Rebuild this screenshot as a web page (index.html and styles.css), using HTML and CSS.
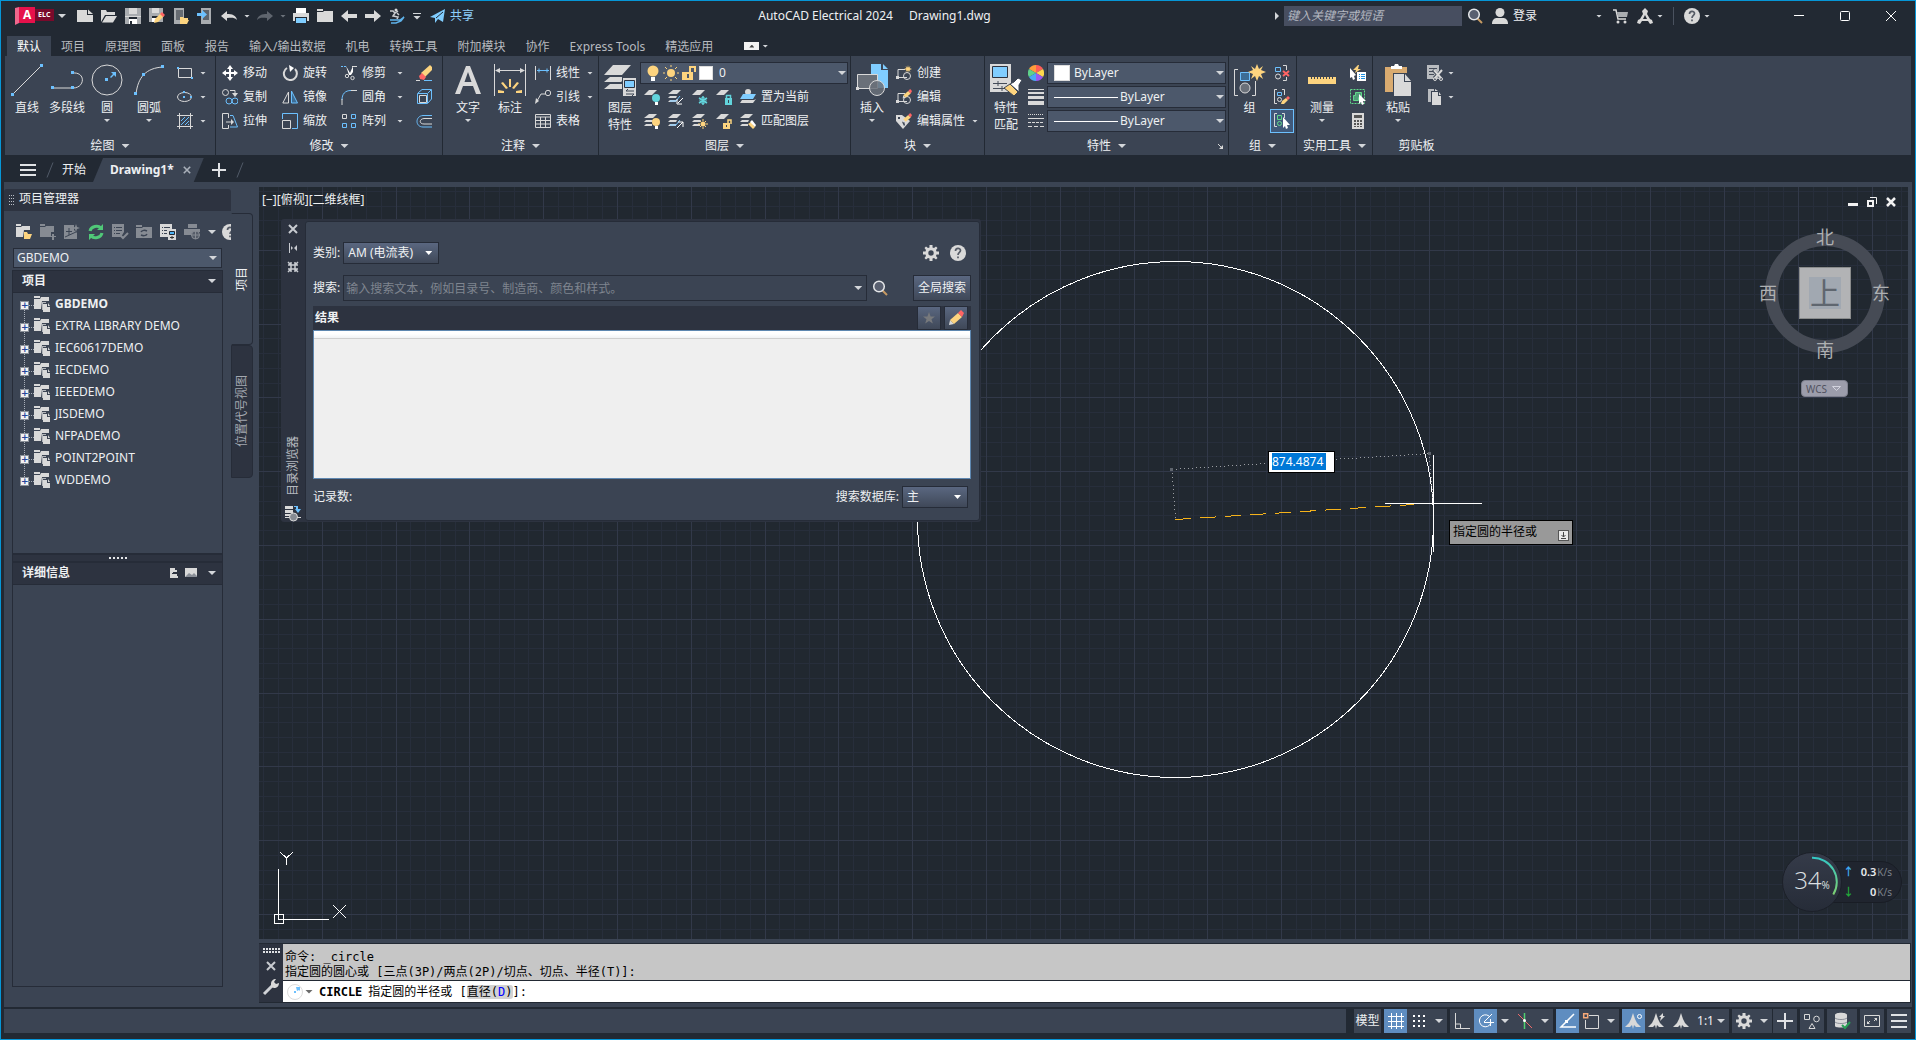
FILE: index.html
```html
<!DOCTYPE html>
<html lang="zh-CN">
<head>
<meta charset="utf-8">
<title>AutoCAD Electrical 2024 - Drawing1.dwg</title>
<link rel="stylesheet" href="styles.css">
</head>
<body>
<svg class="sprite" aria-hidden="true">
  <symbol id="i-new" viewBox="0 0 16 16"><path class="f" d="M0 2h10v5h6v7H0z"/><path class="f" d="M11 1.500l5 4.500h-5z"/></symbol>
  <symbol id="i-open" viewBox="0 0 16 16"><path class="f" d="M0 2h5l1 2h8v3H4L0 14zM5 8h11l-4 6.500H1z"/></symbol>
  <symbol id="i-save" viewBox="0 0 16 16"><path fill="#a9acb0" d="M0 0h16v16H0z"/><path class="f" d="M4 0h8v6H4zM0 8h16v1H0z"/><path fill="#fff" d="M4 11h8v5H4z"/><path fill="#222933" d="M4 9h8v2H4zM5 13h2v3H5z"/></symbol>
  <symbol id="i-saveas" viewBox="0 0 16 16"><path fill="#a9acb0" d="M0 0h14v14H0z"/><path class="f" d="M3 0h7v5H3z"/><path fill="#222933" d="M3 8h8v2H3z"/><path fill="#fff" d="M3 10h4v4H3z"/><path class="y" d="M5 15l1-4 6-6 3 3-6 6z"/><path class="r" d="M11 6l2-2 3 3-2 2z"/></symbol>
  <symbol id="i-webopen" viewBox="0 0 16 16"><path fill="#a9acb0" d="M1 0h10v16H1z"/><path fill="#666b72" d="M3 2h7v10H3z"/><path class="y" d="M7 9h3l1 1h4v2l1 0-2 4H7z"/></symbol>
  <symbol id="i-websave" viewBox="0 0 16 16"><path fill="#a9acb0" d="M4 0h10v16H4z"/><path fill="#5d636c" d="M6 2h6v10H6z"/><path class="b" d="M0 5h5V2l5 4.500L5 11V8H0z"/></symbol>
  <symbol id="i-undo" viewBox="0 0 16 16"><path class="f" d="M0 8l6-5v3c5 0 9 1 10 6-3-3-6-2-10-2v3z"/></symbol>
  <symbol id="i-redo" viewBox="0 0 16 16"><path fill="#5f656e" d="M16 8l-6-5v3C5 6 1 7 0 12c3-3 6-2 10-2v3z"/></symbol>
  <symbol id="i-print" viewBox="0 0 16 16"><path fill="#fff" d="M3 0h10v5H3z"/><path class="f" d="M0 5h16v8h-2V9H2v4H0z"/><path fill="#80cdff" d="M3 10h10v5H3z"/></symbol>
  <symbol id="i-folder" viewBox="0 0 16 16"><path class="f" d="M0 1h6v2H0zM0 4h6l1-1h9v11H0z"/></symbol>
  <symbol id="i-left" viewBox="0 0 16 16"><path class="f" d="M0 8l7-6v4h9v4H7v4z"/></symbol>
  <symbol id="i-right" viewBox="0 0 16 16"><path class="f" d="M16 8L9 2v4H0v4h9v4z"/></symbol>
  <symbol id="i-surf" viewBox="0 0 16 16"><g fill="none" stroke="#c9ccd0" stroke-width="1.500"><path d="M1 3h3l2 2 3-2M6 5L4 8l5 1-1 2M8 5l2 2"/></g><circle class="f" cx="7" cy="2" r="1.500"/><path fill="none" stroke="#5fb3ec" stroke-width="1.500" d="M1 12h10l4-3-3 4-5 2H2"/></symbol>
  <symbol id="i-plane" viewBox="0 0 16 16"><path fill="#80cdff" d="M0 9L15 1l-2 13-5-3-3 4v-5z"/><path stroke="#222933" fill="none" d="M6 10l7-6"/></symbol>
  <symbol id="i-mag" viewBox="0 0 16 16"><path stroke="#c79a63" stroke-width="2" d="M10 10l5 5"/><circle cx="7" cy="6.500" r="5.300" fill="#596070" stroke="#e4e6e8" stroke-width="1.500"/></symbol>
  <symbol id="i-user" viewBox="0 0 16 16"><circle class="f" cx="8" cy="4.500" r="4.500"/><path class="f" d="M0 16c0-5 3-6 5-6h6c2 0 5 1 5 6z"/></symbol>
  <symbol id="i-cart" viewBox="0 0 16 16"><path fill="none" stroke="#d9d9d9" stroke-width="1.500" d="M0 2h3l2 9h8"/><path fill="#a9acb0" d="M4 4h11l-1 5H5z"/><circle class="f" cx="5" cy="14" r="1.500"/><circle class="f" cx="12" cy="14" r="1.500"/></symbol>
  <symbol id="i-adsk" viewBox="0 0 16 16"><path class="f" fill-rule="evenodd" d="M8 0l3 3-1 3 3 5 2 1 1 3-3 1-2-3H5l-2 3-3-1 1-3 2-1 3-5-1-3zM8 7l-2 4h4z"/></symbol>
  <symbol id="i-help" viewBox="0 0 16 16"><circle class="f" cx="8" cy="8" r="8"/><path fill="none" stroke="#555b66" stroke-width="1.700" d="M5.500 6c0-3.500 5-3.300 5-.5C10.500 7.500 8 7.300 8 10M8 11.500v1.800"/></symbol>

  <symbol id="i-line" viewBox="0 0 32 32"><path class="l" d="M2 30L30 2"/><path class="b" d="M0 29h3v3H0zM29 0h3v3h-3z"/></symbol>
  <symbol id="i-pline" viewBox="0 0 32 32"><path class="l" d="M2 24h20M22 9c13-1 12 15 0 15"/><path class="b" d="M0 22h3v3H0zM20 22h3v3h-3zM20 7h3v3h-3z"/></symbol>
  <symbol id="i-circle" viewBox="0 0 32 32"><circle class="l" cx="16" cy="16" r="15"/><path class="b" d="M14 14h3v3h-3zM19 13l3-3-2-2h5v5l-2-2-3 3z"/></symbol>
  <symbol id="i-arc" viewBox="0 0 32 32"><path class="l" d="M3 30C5 13 13 4 30 3"/><path class="b" d="M1 28h3v3H1zM9 9h3v3H9zM28 1h3v3h-3z"/></symbol>
  <symbol id="i-rect" viewBox="0 0 16 16"><path class="l" d="M1.500 3.500h13v9h-13z"/><path class="b" d="M0 2h2v2H0zM14 12h2v2h-2z"/></symbol>
  <symbol id="i-ellipse" viewBox="0 0 16 16"><ellipse class="l" cx="7.500" cy="8" rx="7" ry="4.500"/><path class="b" d="M6 7h2v2H6zM6 2h2v2H6zM13 7h2v2h-2z"/></symbol>
  <symbol id="i-hatch" viewBox="0 0 16 16"><path class="l" d="M2.500 0v16M13.500 0v16M0 2.500h16M0 13.500h16"/><path class="lb" d="M4 8l4-4M4 12l8-8M8 12l4-4M11 12l1-1"/></symbol>

  <symbol id="i-move" viewBox="0 0 16 16"><path fill="#fff" d="M8 0l3 4H9v3h3V5l4 3-4 3V9H9v3h2l-3 4-3-4h2V9H4v2L0 8l4-3v2h3V4H5z"/></symbol>
  <symbol id="i-rotate" viewBox="0 0 16 16"><path class="l w" d="M5 3a6.500 6.500 0 1 0 8 1"/><path fill="#fff" d="M7 0l5 3-4 4z"/></symbol>
  <symbol id="i-trim" viewBox="0 0 16 16"><path class="lb" stroke-dasharray="2 1" d="M0 1.500h5"/><path class="l" d="M11 1.500h5"/><path fill="#fff" d="M5 1l4 7 3-7v6l-2 3-2 0z"/><circle class="l" cx="6" cy="11" r="1.700"/><circle class="l" cx="11.500" cy="13" r="1.700"/></symbol>
  <symbol id="i-erase" viewBox="0 0 16 16"><path class="y" d="M5 8l9-8 2 2v3l-7 7z"/><path class="r" d="M3 11l3-3 4 4-2 3-4-1z"/><path class="lb" d="M8 15.500h8"/><path class="l" d="M0 15.500h4"/></symbol>
  <symbol id="i-copy" viewBox="0 0 16 16"><circle class="l" cx="3.500" cy="3.500" r="3"/><circle class="lb" cx="7" cy="12" r="3"/><circle class="lb" cx="13" cy="12" r="3"/><path class="l" d="M8 1.500h5V5"/><path class="f" d="M10 4h6l-3 4z"/></symbol>
  <symbol id="i-mirror" viewBox="0 0 16 16"><path class="l" d="M6.500 3v11H.8z"/><path fill="#3d6d95" stroke="#6cc0fe" d="M9.500 2v12h6z"/></symbol>
  <symbol id="i-fillet" viewBox="0 0 16 16"><path class="lb" d="M1 11C1 5 4 1.500 10 1.500"/><path class="l" d="M10 1.500h6M1 10v6"/></symbol>
  <symbol id="i-box" viewBox="0 0 16 16"><path class="lb" d="M2 4l4-3.500h9.500V10L12 14M15 1l-3 3M1.500 4.500h10v10h-10z"/><path class="l" d="M3.500 6.500h7v7h-7z"/></symbol>
  <symbol id="i-stretch" viewBox="0 0 16 16"><path class="l" d="M6.500 5V.5h-6v15h6V12M4 9h6"/><path class="lb" d="M8 2.500h3L15.500 14H8"/><path class="f" d="M9 6l3 3-3 3z"/></symbol>
  <symbol id="i-scale" viewBox="0 0 16 16"><path class="lb" d="M.5 6V.5h15v15H10"/><path class="l" d="M.5 7.500h8v8h-8z"/></symbol>
  <symbol id="i-array" viewBox="0 0 16 16"><path class="l" d="M1.500 1.500h4v4h-4z"/><path class="lb" d="M10.500 1.500h4v4h-4zM1.500 10.500h4v4h-4zM10.500 10.500h4v4h-4z"/></symbol>
  <symbol id="i-offset" viewBox="0 0 16 16"><path class="lb" d="M16 2.500H7C-1 3-1 14 7 14h9"/><path class="l" d="M16 5.500H8C3 6 3 11 8 11h8"/></symbol>

  <symbol id="i-text" viewBox="0 0 32 32"><path class="f" d="M3 30L14 2h4l11 28h-5l-3-8H11l-3 8zM12.500 18h7L16 8z"/></symbol>
  <symbol id="i-dim" viewBox="0 0 32 32"><path class="l" d="M.5 0v32M31.500 0v32M2 6.500h28"/><path class="f" d="M1 6.500L6 4v5zM31 6.500L26 4v5z"/><path class="y" d="M4 26l6 1v2H4zM7 19l2-1 5 6-2 1zM15 15h2v8h-2zM25 19l-2-1-5 6 2 1zM28 26l-6 1v2h6z"/></symbol>
  <symbol id="i-linear" viewBox="0 0 16 16"><path class="l" d="M.5 1v14M15.500 1v14"/><path class="lb" d="M2 5.500h12M4 3.500v4M12 3.500v4"/></symbol>
  <symbol id="i-leader" viewBox="0 0 16 16"><circle class="l" cx="13" cy="4" r="2.700"/><path class="l" d="M10 5H6L2 12"/><path class="f" d="M0 15l1-6 3 3z"/></symbol>
  <symbol id="i-table" viewBox="0 0 16 16"><path class="l" d="M.5 1.500h15v13H.5zM.5 4h15M.5 7.500h15M.5 11h15M5.500 4v10M10.500 4v10"/></symbol>

  <symbol id="i-layers" viewBox="0 0 32 32"><path class="f" d="M9 1h18L18 11H0zM6 13h16l-5 5H0zM6 20h12v5H0z"/><path fill="#3b4453" d="M18 13h14v19H18z"/><path class="f" d="M19 14h13v18H19z"/><path fill="#80cdff" stroke="#2d3340" d="M20.500 16.500h10v7h-10z"/><path stroke="#3b4453" d="M22 27h8M22 30h8M24 25l-2 2M28 32l2-2" fill="none"/></symbol>
  <symbol id="i-bulb" viewBox="0 0 16 16"><circle class="y" cx="8" cy="6" r="5.500"/><path fill="#fff" d="M6 12h4v4H6z"/></symbol>
  <symbol id="i-sun" viewBox="0 0 16 16"><circle class="y" cx="8" cy="8" r="4"/><path class="ly" d="M8 0v2M8 14v2M0 8h2M14 8h2M2 2l2 2M12 12l2 2M14 2l-2 2M4 12l-2 2"/></symbol>
  <symbol id="i-unlock" viewBox="0 0 16 16"><path class="y" d="M1 7h11v8H1z"/><path fill="none" stroke="#fdd47f" stroke-width="2" d="M9 7V2h5v5"/><path fill="#4c586b" d="M6 9h2v4H6z"/></symbol>
  <symbol id="l-one" viewBox="0 0 16 16"><path class="f" d="M5 1h8L8 6H0z"/></symbol>
  <symbol id="l-three" viewBox="0 0 16 16"><path class="f" d="M5 1h8L9 5H0zM2 7h7l-1 2H0zM2 11h6v2H0z"/></symbol>
  <symbol id="i-lyset" viewBox="0 0 16 16"><circle class="f" cx="8" cy="3" r="3"/><path fill="#80cdff" d="M3 5h13l-3 5H0z"/><path class="f" d="M2 11h12l2-1-3 4H0z"/></symbol>
  <symbol id="i-lymatch" viewBox="0 0 16 16"><path class="f" d="M5 1h8L9 5H0zM2 7h7l-1 2H0zM2 11h6v2H0z"/><path class="y" d="M8 11l3-2 4 5-2 2z"/><path fill="#fff" d="M10 9l2-2 4 5-1 2z"/></symbol>

  <symbol id="i-insert" viewBox="0 0 32 32"><path fill="#80cdff" d="M15 0h10v6h7v18H15z"/><path fill="#80cdff" d="M27 0l5 5h-5z"/><path fill="#6a7079" stroke="#d9d9d9" d="M1.500 10.500h20v14h-20z"/><circle fill="#6a7079" fill-opacity=".85" stroke="#d9d9d9" cx="21" cy="24" r="7.500"/><path class="f" d="M0 23h3v3H0z"/></symbol>
  <symbol id="i-block" viewBox="0 0 16 16"><path class="l" d="M9 4.500H2v8h9"/><circle class="l" cx="11" cy="11" r="3.500"/><path class="f" d="M0 11h3v3H0z"/></symbol>
  <symbol id="i-star8" viewBox="0 0 16 16"><path class="y" d="M8 0l1 5 4-3-2 4 5 2-5 2 2 4-4-3-1 5-1-5-4 3 2-4-5-2 5-2-2-4 4 3z"/></symbol>
  <symbol id="i-pencil" viewBox="0 0 16 16"><path class="f" d="M1 15l1-5 4 4z"/><path class="y" d="M2 10l8-7 4 4-8 7z"/><path class="r" d="M10 3l3-3 3 3-2 4z"/></symbol>
  <symbol id="i-tag" viewBox="0 0 16 16"><path class="f" d="M0 2h6l8 6-7 8-7-8z"/><path fill="#3b4453" d="M2 4h2v2H2zM6 9l2-1 1 4-1 1z"/></symbol>

  <symbol id="i-match" viewBox="0 0 32 32"><path class="f" d="M0 0h21v28H0z"/><path fill="#80cdff" stroke="#2d3340" d="M2.500 2.500h15v11h-15z"/><path stroke="#444c59" d="M3 19.500h14M3 24.500h14M8 17v5M12 22v5"/><path class="y" stroke="#3b4453" d="M14 24l6-4 8 8-4 4z"/><path fill="#fff" stroke="#3b4453" d="M20 20l4-2 4-4 4 2-3 5v7z"/></symbol>
  <symbol id="i-wheel" viewBox="0 0 16 16"><path fill="#ff5e57" d="M8 8V0a8 8 0 0 1 7 4z"/><path fill="#ff9d3b" d="M8 8L1 4a8 8 0 0 1 7-4z" /><path fill="#ffd84d" d="M8 8l7-4a8 8 0 0 1 0 8z"/><path fill="#5fd18a" d="M8 8L1 12a8 8 0 0 1 0-8z"/><path fill="#9b59f0" d="M8 8l7 4a8 8 0 0 1-7 4z"/><path fill="#4aa8f5" d="M8 8v8a8 8 0 0 1-7-4z"/></symbol>
  <symbol id="i-weight" viewBox="0 0 16 16"><path class="f" d="M0 0h16v1H0zM0 3h16v2H0zM0 7h16v3H0zM0 12h16v4H0z"/></symbol>
  <symbol id="i-ltype" viewBox="0 0 16 16"><path class="l" d="M0 5.500h16" /><path class="l" stroke-dasharray="1 1" d="M0 1.500h16"/><path class="l" stroke-dasharray="3 1" d="M0 9.500h16"/><path class="l" stroke-dasharray="4 2" d="M0 13.500h16"/></symbol>

  <symbol id="i-group" viewBox="0 0 32 32"><path class="l" d="M4 5.500H.5v26H4M18 31.500h3.500V17"/><path fill="#3d6d95" stroke="#6cc0fe" d="M6.500 8.500h9v8h-9z"/><circle fill="#6a7079" stroke="#d9d9d9" cx="11" cy="24" r="5"/><path class="y" d="M23 0l2 5 4-3-2 4 5 2-5 2 2 5-4-3-2 5-2-5-4 3 2-5-5-2 5-2-2-4 4 3z"/></symbol>
  <symbol id="i-ungroup" viewBox="0 0 16 16"><path class="lb" d="M1.500 2.500h5v4h-5z"/><circle class="l" cx="4" cy="11.500" r="2.500"/><path class="l" d="M9 .5h3.500V5M9 15.500h3.500V12"/><path stroke="#ff6464" stroke-width="2" d="M9 6l6 5M15 6l-6 5"/></symbol>
  <symbol id="i-gedit" viewBox="0 0 16 16"><path class="l" d="M3 .5H.5v14H3M8 .5h2.500V6"/><path class="lb" d="M3.500 3.500h4v3h-4z"/><circle class="l" cx="5.500" cy="10.500" r="2"/><path class="y" d="M7 15l1-3 4-3 2 2-4 4z"/><path class="r" d="M12 9l2-2 2 2-2 2z"/></symbol>
  <symbol id="i-gsel" viewBox="0 0 16 16"><path class="l" d="M3 .5H.5v13H3M8 .5h2.500V5"/><path fill="none" stroke="#62d98b" d="M3.500 2.500h4v4h-4z"/><circle fill="none" stroke="#62d98b" cx="5.500" cy="10.500" r="2"/><path fill="#fff" d="M9 4l7 8h-3l1 3-2 1-1-3-2 2z"/></symbol>
  <symbol id="i-ruler" viewBox="0 0 32 32"><path class="y" d="M2 13h28v7H2z"/><path stroke="#3b4453" d="M5.500 12v3M8.500 12v3M11.500 12v3M14.500 12v3M17.500 12v3M20.500 12v3M23.500 12v3M26.500 12v3"/></symbol>
  <symbol id="i-qsel" viewBox="0 0 16 16"><path fill="#fff" d="M0 3l6 7-2 1 1 3-2 1-1-3-2 1z"/><path class="y" d="M8 0L3 5h3L5 8l6-4H8l1-4z"/><path fill="#fff" d="M7 7h9v9H7z"/><path stroke="#1f8fe0" d="M9 9.500h1M11 9.500h4M9 11.500h1M11 11.500h4M9 13.500h1M11 13.500h4"/></symbol>
  <symbol id="i-selall" viewBox="0 0 16 16"><path fill="none" stroke="#62d98b" stroke-dasharray="2 1" d="M.5.5h14v14H.5z"/><path fill="#4f9d78" stroke="#62d98b" d="M5.500 3.500h6v5h-3v3h-5v-5h2z"/><path fill="#fff" d="M9 5l7 7h-3l1 3-2 1-1-3-2 2z"/></symbol>
  <symbol id="i-calc" viewBox="0 0 16 16"><path class="f" d="M2 0h12v16H2z"/><path fill="#555" d="M4 2h8v3H4zM4 7h2v2H4zM7 7h2v2H7zM10 7h2v2h-2zM4 10h2v2H4zM7 10h2v2H7zM10 10h2v2h-2zM4 13h2v1H4zM7 13h2v1H7zM10 13h2v1h-2z"/></symbol>
  <symbol id="i-paste" viewBox="0 0 32 32"><path fill="#d9ab70" d="M3 3h22v6H11v19H3z"/><path fill="#fff" d="M9 2h3l1-2h3l1 2h3v3H9z"/><path class="f" d="M12 10h10v8h7v14H12z"/><path class="f" d="M23 10l6 7h-6z"/></symbol>
  <symbol id="i-cut" viewBox="0 0 16 16"><path fill="#b9bcc0" d="M0 0h12v14H0z"/><path stroke="#444c59" d="M2 3.500h8M2 6.500h5M2 9.500h5"/><path stroke="#3b4453" stroke-width="3" d="M6 5l8 8M15 5l-8 8"/><path class="l w" d="M7 5l7 8M15 5l-7 8"/><circle class="l" cx="8" cy="14" r="1.500"/><circle class="l" cx="14" cy="14" r="1.500"/></symbol>
  <symbol id="i-copyclip" viewBox="0 0 16 16"><path fill="#b9bcc0" d="M1 0h6v2H4v11H1z"/><path class="f" d="M5 3h6v4h3v9H5zM12 3l2 3h-2zM8 0l3 2H8z"/></symbol>

  <symbol id="i-proj" viewBox="0 0 16 16"><path class="f" d="M0 0h6v2H0zM0 3h6l1-2h8v4H8l-1 8H0z"/><path fill="#b4b7bb" d="M8 6h4v1H9v7H8z"/><path class="f" d="M9 8h4v3h3v5H9zM14 7l2 3h-2z"/></symbol>
  <symbol id="i-gear" viewBox="0 0 16 16"><path class="f" fill-rule="evenodd" d="M6.500 0h3v2.500l1.500.6L13 1.500 14.500 3 13 5l.5 1.500H16v3h-2.500L13 11l1.500 2-1.500 1.500-2-1.500-1.500.5V16h-3v-2.500L5 13l-2 1.500L1.500 13 3 11l-.5-1.500H0v-3h2.500L3 5 1.500 3 3 1.500l2 1.600 1.500-.6zM8 5.300a2.700 2.700 0 1 0 0 5.400 2.700 2.700 0 0 0 0-5.400z"/></symbol>
  <symbol id="i-anno" viewBox="0 0 16 16"><path class="f" d="M8 0l2 6 2 4 4 4-5 0-2-2-1 4-1-4-2 2H0l4-4 2-4z"/></symbol>
</svg>

<div class="window">
  <header class="titlebar">
    <button class="logo" aria-label="应用程序菜单"><svg width="40" height="18" viewBox="0 0 40 18"><path fill="#7a0a2b" d="M19 2h20v12H19z"/><path fill="#e6114b" d="M4 0h16v16H4z"/><path fill="#f0678c" d="M0 1l4-1v16l-4 2z"/></svg><b class="logo-a">A</b><b class="logo-elc">ELC</b></button>
    <i class="caret big logo-caret"></i>
    <nav class="qat">
      <button><svg><use href="#i-new"/></svg></button>
      <button><svg><use href="#i-open"/></svg></button>
      <button><svg><use href="#i-save"/></svg></button>
      <button><svg><use href="#i-saveas"/></svg></button>
      <button><svg><use href="#i-webopen"/></svg></button>
      <button><svg><use href="#i-websave"/></svg></button>
      <button><svg><use href="#i-undo"/></svg></button>
      <button class="slim"><i class="caret"></i></button>
      <button><svg><use href="#i-redo"/></svg></button>
      <button class="slim"><i class="caret dim"></i></button>
      <button><svg><use href="#i-print"/></svg></button>
      <button><svg><use href="#i-folder"/></svg></button>
      <button><svg><use href="#i-left"/></svg></button>
      <button><svg><use href="#i-right"/></svg></button>
      <button><svg><use href="#i-surf"/></svg></button>
      <button class="slim more"><i class="dash"></i><i class="caret big"></i></button>
      <button class="share"><svg><use href="#i-plane"/></svg>共享</button>
    </nav>
    <h1 class="caption"><span>AutoCAD Electrical 2024</span><span>Drawing1.dwg</span></h1>
    <div class="infocenter">
      <i class="caret side"></i>
      <input type="text" aria-label="搜索帮助" placeholder="键入关键字或短语">
      <button><svg><use href="#i-mag"/></svg></button>
      <button class="login"><svg><use href="#i-user"/></svg>登录</button>
      <i class="caret"></i>
      <button><svg><use href="#i-cart"/></svg></button>
      <button><svg><use href="#i-adsk"/></svg></button>
      <i class="caret"></i>
      <span class="vline"></span>
      <button><svg><use href="#i-help"/></svg></button>
      <i class="caret"></i>
    </div>
    <div class="winctl">
      <button aria-label="最小化"><svg viewBox="0 0 12 12"><path class="lw" d="M1 5.500h10"/></svg></button>
      <button aria-label="最大化"><svg viewBox="0 0 12 12"><rect class="lw" x="1.500" y="1.500" width="9" height="9" rx="1"/></svg></button>
      <button aria-label="关闭"><svg viewBox="0 0 12 12"><path class="lw" d="M1 1l10 10M11 1L1 11"/></svg></button>
    </div>
  </header>

  <nav class="tabs">
    <a href="#" class="on">默认</a><a href="#">项目</a><a href="#">原理图</a><a href="#">面板</a><a href="#">报告</a><a href="#">输入/输出数据</a><a href="#">机电</a><a href="#">转换工具</a><a href="#">附加模块</a><a href="#">协作</a><a href="#">Express Tools</a><a href="#">精选应用</a>
    <button class="collapse" aria-label="最小化功能区"><i></i></button><i class="caret"></i>
  </nav>

  <div class="ribbon">
    <section class="panel p-draw">
      <div class="tools">
        <button class="lg"><svg><use href="#i-line"/></svg>直线</button>
        <button class="lg"><svg><use href="#i-pline"/></svg>多段线</button>
        <button class="lg"><svg><use href="#i-circle"/></svg>圆<i class="caret"></i></button>
        <button class="lg"><svg><use href="#i-arc"/></svg>圆弧<i class="caret"></i></button>
        <div class="grid g1">
          <button class="sm"><svg><use href="#i-rect"/></svg><i class="caret"></i></button>
          <button class="sm"><svg><use href="#i-ellipse"/></svg><i class="caret"></i></button>
          <button class="sm"><svg><use href="#i-hatch"/></svg><i class="caret"></i></button>
        </div>
      </div>
      <h2>绘图<i class="caret big"></i></h2>
    </section>
    <section class="panel p-modify">
      <div class="grid g4">
        <button class="sm"><svg><use href="#i-move"/></svg>移动</button>
        <button class="sm"><svg><use href="#i-rotate"/></svg>旋转</button>
        <button class="sm"><svg><use href="#i-trim"/></svg>修剪<i class="caret"></i></button>
        <button class="sm"><svg><use href="#i-erase"/></svg></button>
        <button class="sm"><svg><use href="#i-copy"/></svg>复制</button>
        <button class="sm"><svg><use href="#i-mirror"/></svg>镜像</button>
        <button class="sm"><svg><use href="#i-fillet"/></svg>圆角<i class="caret"></i></button>
        <button class="sm"><svg><use href="#i-box"/></svg></button>
        <button class="sm"><svg><use href="#i-stretch"/></svg>拉伸</button>
        <button class="sm"><svg><use href="#i-scale"/></svg>缩放</button>
        <button class="sm"><svg><use href="#i-array"/></svg>阵列<i class="caret"></i></button>
        <button class="sm"><svg><use href="#i-offset"/></svg></button>
      </div>
      <h2>修改<i class="caret big"></i></h2>
    </section>
    <section class="panel p-note">
      <div class="tools">
        <button class="lg"><svg><use href="#i-text"/></svg>文字<i class="caret"></i></button>
        <button class="lg"><svg><use href="#i-dim"/></svg>标注</button>
        <div class="grid g1">
          <button class="sm"><svg><use href="#i-linear"/></svg>线性<i class="caret"></i></button>
          <button class="sm"><svg><use href="#i-leader"/></svg>引线<i class="caret"></i></button>
          <button class="sm"><svg><use href="#i-table"/></svg>表格</button>
        </div>
      </div>
      <h2>注释<i class="caret big"></i></h2>
    </section>
    <section class="panel p-layer">
      <div class="tools">
        <button class="lg"><svg><use href="#i-layers"/></svg>图层<br>特性</button>
        <div class="layers">
          <label class="combo"><svg><use href="#i-bulb"/></svg><svg><use href="#i-sun"/></svg><svg><use href="#i-unlock"/></svg><i class="swatch"></i><select aria-label="图层"><option>0</option></select></label>
          <div class="grid g6">
            <button class="sm"><svg viewBox="0 0 16 16"><use href="#l-one"/><circle class="c" cx="12" cy="9" r="4"/><path fill="#fff" d="M11 13h3v3h-3z"/></svg></button>
            <button class="sm"><svg viewBox="0 0 16 16"><use href="#l-three"/><path class="lb" d="M2 12h6l4-5"/><path class="lw" d="M15 9l-5 5M9 10v5h5"/></svg></button>
            <button class="sm"><svg viewBox="0 0 16 16"><use href="#l-one"/><path fill="none" stroke="#62d4dc" stroke-width="1.500" d="M11 7v9M7 9l8 5M15 9l-8 5"/><circle fill="none" stroke="#62d4dc" cx="11" cy="11.500" r="3"/></svg></button>
            <button class="sm"><svg viewBox="0 0 16 16"><use href="#l-one"/><path class="c" d="M9 9h7v7H9z"/><path fill="none" stroke="#62d4dc" stroke-width="1.500" d="M10.500 9V6.500h4V9"/><path fill="#3b4453" d="M12 11h1v3h-1z"/></svg></button>
            <button class="sm"><svg><use href="#i-lyset"/></svg>置为当前</button>
            <button class="sm"><svg viewBox="0 0 16 16"><use href="#l-three"/><circle class="y" cx="12" cy="9" r="4"/><path fill="#fff" d="M11 13h3v3h-3z"/></svg></button>
            <button class="sm"><svg viewBox="0 0 16 16"><use href="#l-three"/><path class="lb" d="M2 12h6l4-5"/><path class="lw" d="M9 15l6-6M10 9h5v5"/></svg></button>
            <button class="sm"><svg viewBox="0 0 16 16"><use href="#l-three"/><circle class="y" cx="11" cy="11" r="2.500"/><path class="ly" d="M11 6v2M11 14v2M6 11h2M14 11h2M8 8l1 1M14 8l-1 1M8 14l1-1M14 14l-1-1"/></svg></button>
            <button class="sm"><svg viewBox="0 0 16 16"><use href="#l-one"/><path class="y" d="M7 10h7v6H7z"/><path fill="none" stroke="#fdd47f" stroke-width="1.500" d="M12 10V7h3v4"/><path fill="#3b4453" d="M10 12h1v2h-1z"/></svg></button>
            <button class="sm"><svg><use href="#i-lymatch"/></svg>匹配图层</button>
          </div>
        </div>
      </div>
      <h2>图层<i class="caret big"></i></h2>
    </section>
    <section class="panel p-block">
      <div class="tools">
        <button class="lg"><svg><use href="#i-insert"/></svg>插入<i class="caret"></i></button>
        <div class="grid g1">
          <button class="sm"><svg viewBox="0 0 16 16"><use href="#i-block"/><use href="#i-star8" x="8" y="0" width="8" height="8"/></svg>创建</button>
          <button class="sm"><svg viewBox="0 0 16 16"><use href="#i-block"/><use href="#i-pencil" x="6" y="0" width="10" height="10"/></svg>编辑</button>
          <button class="sm"><svg viewBox="0 0 16 16"><use href="#i-tag"/><use href="#i-pencil" x="6" y="0" width="10" height="10"/></svg>编辑属性<i class="caret tight"></i></button>
        </div>
      </div>
      <h2>块<i class="caret big"></i></h2>
    </section>
    <section class="panel p-prop">
      <div class="tools">
        <button class="lg"><svg><use href="#i-match"/></svg>特性<br>匹配</button>
        <div class="props">
          <svg><use href="#i-wheel"/></svg><label class="combo"><i class="swatch"></i><select aria-label="对象颜色"><option>ByLayer</option></select></label>
          <svg><use href="#i-weight"/></svg><label class="combo"><i class="rule"></i><select aria-label="线宽"><option>ByLayer</option></select></label>
          <svg><use href="#i-ltype"/></svg><label class="combo"><i class="rule"></i><select aria-label="线型"><option>ByLayer</option></select></label>
        </div>
      </div>
      <h2>特性<i class="caret big"></i><svg class="launcher" viewBox="0 0 8 8"><path class="l" d="M1 1l4 4"/><path class="f" d="M6 2v4H2z"/></svg></h2>
    </section>
    <section class="panel p-group">
      <div class="tools">
        <button class="lg"><svg><use href="#i-group"/></svg>组</button>
        <div class="grid g1">
          <button class="sm"><svg><use href="#i-ungroup"/></svg></button>
          <button class="sm"><svg><use href="#i-gedit"/></svg></button>
          <button class="sm pressed"><svg><use href="#i-gsel"/></svg></button>
        </div>
      </div>
      <h2>组<i class="caret big"></i></h2>
    </section>
    <section class="panel p-util">
      <div class="tools">
        <button class="lg"><svg><use href="#i-ruler"/></svg>测量<i class="caret"></i></button>
        <div class="grid g1">
          <button class="sm"><svg><use href="#i-qsel"/></svg></button>
          <button class="sm"><svg><use href="#i-selall"/></svg></button>
          <button class="sm"><svg><use href="#i-calc"/></svg></button>
        </div>
      </div>
      <h2>实用工具<i class="caret big"></i></h2>
    </section>
    <section class="panel p-clip">
      <div class="tools">
        <button class="lg"><svg><use href="#i-paste"/></svg>粘贴<i class="caret"></i></button>
        <div class="grid g1">
          <button class="sm"><svg><use href="#i-cut"/></svg><i class="caret tight"></i></button>
          <button class="sm"><svg><use href="#i-copyclip"/></svg><i class="caret tight"></i></button>
        </div>
      </div>
      <h2>剪贴板</h2>
    </section>
  </div>

  <nav class="filetabs">
    <button class="menu" aria-label="菜单"><i></i><i></i><i></i></button>
    <svg class="slash" viewBox="0 0 10 16"><path stroke="#515a68" d="M2 15.500L8 .5"/></svg>
    <a href="#" class="start">开始</a>
    <div class="filetab"><a href="#">Drawing1*</a><button aria-label="关闭图形"><svg viewBox="0 0 10 10"><path stroke="#a9b0ba" stroke-width="2" d="M1 1l8 8M9 1L1 9"/></svg></button></div>
    <button class="plus" aria-label="新图形"><svg viewBox="0 0 14 14"><path stroke="#e0e2e5" stroke-width="2" d="M7 0v14M0 7h14"/></svg></button>
    <svg class="slash" viewBox="0 0 10 16"><path stroke="#515a68" d="M2 15.500L8 .5"/></svg>
  </nav>

  <main class="work">
    <aside class="dock">
      <div class="pm">
        <h3 class="pm-title"><i class="grip"></i>项目管理器</h3>
        <div class="pm-body">
          <div class="pm-bar">
            <button><svg viewBox="0 0 16 16"><path class="f" d="M0 0h5v2H0zM0 3h5l1-1h8v4H8l-1 7H0z"/><path class="y" d="M8 8h3l1 2h4l-2 5H8z"/></svg></button>
            <button><svg viewBox="0 0 16 16"><path class="d" d="M0 0h5v2H0zM0 3h5l1-1h8v6h-3v5H0z"/><path class="d" d="M12 10h2v2h2v1h-2v3h-2v-3h-2v-1h2z"/></svg></button>
            <button><svg viewBox="0 0 16 16"><path class="d" d="M0 1h10v5l3 3v6H0z"/><path stroke="#3b4453" fill="none" d="M2 7.500h6M5 4v7M1 13l11-5"/><path class="d" d="M12 0l1 3 3 1-3 1-1 3-1-3-3-1 3-1z"/></svg></button>
            <button><svg viewBox="0 0 16 16"><path fill="none" stroke="#50c878" stroke-width="3" d="M2 7c1-5 8-6 11-3M14 9c-1 5-8 6-11 3"/><path fill="#50c878" d="M15 0v6H9zM1 16v-6h6z"/></svg></button>
            <button><svg viewBox="0 0 16 16"><path class="d" d="M0 0h12v8l-3 5H0z"/><path stroke="#3b4453" d="M2 3.500h1M4 3.500h6M2 6.500h1M4 6.500h6M2 9.500h1M4 9.500h4"/><path fill="none" stroke="#868b93" stroke-width="2" d="M8 11l3 3 5-5"/></svg></button>
            <button><svg viewBox="0 0 16 16"><path class="d" d="M0 1h6v2H0zM0 4h6l1-1h9v11H0z"/><path fill="none" stroke="#3b4453" stroke-width="1.500" d="M5 8c1-2 4-2 6-1M11 10c-1 2-4 2-6 1"/></svg></button>
            <button><svg viewBox="0 0 16 16"><path class="f" d="M0 0h12v5H8v8H0z"/><path stroke="#3b4453" d="M2 3.500h1M4 3.500h6M2 6.500h1M4 6.500h3M2 9.500h1M4 9.500h3"/><path class="f" d="M8 5h8v11H8z"/><path fill="#4db2f5" stroke="#222933" d="M9.500 7.500h5v3h-5z"/><path stroke="#333" d="M10 13.500h4M12 12v3"/></svg></button>
            <button><svg viewBox="0 0 16 16"><path class="d" d="M4 0h9v4H4zM0 5h16v3H8v3H0z"/><circle cx="11.500" cy="11" r="4" fill="#555c68" stroke="#868b93"/><path stroke="#868b93" fill="none" d="M7 11h9M11.500 7v8"/></svg></button>
            <i class="caret big"></i>
            <button><svg><use href="#i-help"/></svg></button>
          </div>
          <label class="combo pm-sel"><select aria-label="当前项目"><option>GBDEMO</option></select></label>
          <h4 class="bar">项目<i class="caret big"></i></h4>
          <ul class="tree">
            <li class="cur"><button>+</button><svg><use href="#i-proj"/></svg>GBDEMO</li>
            <li><button>+</button><svg><use href="#i-proj"/></svg>EXTRA LIBRARY DEMO</li>
            <li><button>+</button><svg><use href="#i-proj"/></svg>IEC60617DEMO</li>
            <li><button>+</button><svg><use href="#i-proj"/></svg>IECDEMO</li>
            <li><button>+</button><svg><use href="#i-proj"/></svg>IEEEDEMO</li>
            <li><button>+</button><svg><use href="#i-proj"/></svg>JISDEMO</li>
            <li><button>+</button><svg><use href="#i-proj"/></svg>NFPADEMO</li>
            <li><button>+</button><svg><use href="#i-proj"/></svg>POINT2POINT</li>
            <li><button>+</button><svg><use href="#i-proj"/></svg>WDDEMO</li>
          </ul>
          <div class="splitter"><i></i><i></i><i></i><i></i><i></i></div>
          <h4 class="bar">详细信息<span class="bar-icons"><svg viewBox="0 0 10 10"><path class="f" d="M1 0h5v2h2v2H4v1h4v3h1v2H1z"/><path stroke="#2d3340" d="M3 5.500h5"/></svg><svg class="pic" viewBox="0 0 12 10"><path class="f" d="M0 0h12v9H0z"/><path fill="#8a8f98" d="M0 9l4-4 3 2 2-2 3 3v1z"/></svg></span><i class="caret big"></i></h4>
          <div class="details"></div>
        </div>
      </div>
      <div class="sidetabs">
        <button class="on"><span>项目</span></button>
        <button><span>位置代号视图</span></button>
      </div>
    </aside>

    <div class="right">
      <div class="canvas" id="canvas">
        <svg class="drawing">
          <path id="minor" class="minor"/><path id="major" class="major"/>
          <circle class="ent" cx="916.500" cy="332.500" r="258"/>
          <path class="dots" d="M913 282.500L1170 266.500M913 282.500L916.500 332M1170 266.500L1174.500 316"/>
          <path fill="#5e646d" d="M911 281h3v3h-3zM1169 265h3v3h-3z"/>
          <path class="rubber" d="M916.500 332.500L1155 317.500"/>
          <path class="cross" d="M1126 316.500h97M1174.500 268v97"/>
        </svg>
        <div class="vplabel"><button>[−]</button><button>[俯视]</button><button>[二维线框]</button></div>
        <div class="vpctl">
          <button><svg viewBox="0 0 10 10"><path fill="#f2f2f2" d="M0 6h10v3H0z"/></svg></button>
          <button><svg viewBox="0 0 10 10"><path fill="none" stroke="#f2f2f2" stroke-width="2" d="M1 4h5v5H1z"/><path fill="none" stroke="#f2f2f2" d="M3 .5h6.500V7"/></svg></button>
          <button><svg viewBox="0 0 10 10"><path stroke="#f2f2f2" stroke-width="2.500" d="M1 1l8 8M9 1L1 9"/></svg></button>
        </div>
        <svg class="cube" viewBox="0 0 136 140">
          <circle cx="68" cy="70" r="53.500" fill="none" stroke="#464b55" stroke-width="13"/>
          <rect x="42.500" y="44.500" width="51" height="51" fill="#b2b3b5" stroke="#8a8c8c"/>
          <rect x="52" y="54" width="32" height="32" fill="#a1a8b1"/>
          <g class="cube-t"><text x="68" y="21">北</text><text x="68" y="134">南</text><text x="11" y="77">西</text><text x="124" y="77">东</text><text class="top" x="68" y="81">上</text></g>
        </svg>
        <button class="wcs">WCS<svg viewBox="0 0 9 5"><path fill="none" stroke="#d2d3de" d="M.5.5h8l-4 4z"/></svg></button>

        <svg class="ucs" viewBox="0 0 80 76" width="80" height="76"><g fill="none" stroke="#fff"><path d="M5.500 19v51M5.500 69.500h50M1.500 64.500h9v9h-9zM7 2l6.500 6L20 2M13.500 8v7M60 55l13 13M73 55L60 68"/></g></svg>

        <input class="dyn" type="text" aria-label="半径" value="874.4874">
        <div class="tip">指定圆的半径或<svg viewBox="0 0 11 11"><rect x=".5" y=".5" width="10" height="10" fill="#e8e8e8" stroke="#555"/><path fill="none" stroke="#444" d="M5.500 2v5M3.500 5l2 2 2-2M3 8.500h5"/></svg></div>

        <div class="monitor">
          <div class="rates"><p><i class="up">↑</i><b>0.3</b>K/s</p><p><i class="dn">↓</i><b>0</b>K/s</p></div>
          <div class="gauge"><svg viewBox="0 0 60 60"><defs><linearGradient id="arc" x1="0" y1="0" x2="0" y2="1"><stop offset="0" stop-color="#34c8c4"/><stop offset="1" stop-color="#7ed072"/></linearGradient></defs><path fill="none" stroke="url(#arc)" stroke-width="2" d="M30 5a25 25 0 0 1 22 38"/></svg><span>34<small>%</small></span></div>
        </div>

        <section class="palette">
          <div class="rail">
            <button><svg viewBox="0 0 10 10"><path stroke="#c8cbd0" stroke-width="2" d="M1 1l8 8M9 1L1 9"/></svg></button>
            <button><svg viewBox="0 0 10 10"><path fill="#c8cbd0" d="M1 0h1v10H1zM3 3l2 2-2 2zM9 2v6L6 5z"/></svg></button>
            <button><svg viewBox="0 0 10 10"><path stroke="#c8cbd0" stroke-width="1.500" fill="none" d="M3 3h4v4H3zM3 0v3M0 3h3M7 0v3h3M3 10V7H0M7 10V7h3M0 0l3 3M10 0L7 3M0 10l3-3M10 10L7 7"/></svg></button>
            <span class="rail-title">目录浏览器</span>
            <svg class="rail-icon" viewBox="0 0 16 16"><path class="f" d="M0 1h8v3H0zM0 5h8v3H0zM0 9h5v2H0z"/><path class="b" d="M9 1h4v3h3l-3 4-3-4h1V2H9z"/><path class="l" d="M0 12.500h16"/><circle cx="8.500" cy="12" r="4" fill="#868b93" stroke="#d9d9d9"/></svg>
          </div>
          <div class="pbody">
            <div class="prow">
              <label for="cat">类别:</label>
              <span class="drop cat"><select id="cat"><option>AM (电流表)</option></select></span>
              <span class="fill"></span>
              <button class="ico"><svg><use href="#i-gear"/></svg></button>
              <button class="ico"><svg><use href="#i-help"/></svg></button>
            </div>
            <div class="prow search">
              <label for="q">搜索:</label>
              <span class="sfield"><input id="q" type="text" placeholder="输入搜索文本，例如目录号、制造商、颜色和样式。"><i class="caret big"></i></span>
              <button class="ico"><svg><use href="#i-mag"/></svg></button>
              <span class="fill"></span>
              <button class="btn">全局搜索</button>
            </div>
            <div class="reshead"><b>结果</b><button class="btn sq"><svg viewBox="0 0 16 16"><path fill="#77797c" d="M8 2l1.600 4.500H14l-3.500 2.700 1.300 4.300L8 11l-3.800 2.500 1.300-4.300L2 6.500h4.400z"/></svg></button><button class="btn sq"><svg><use href="#i-pencil"/></svg></button></div>
            <div class="results"><div class="cols"></div></div>
            <div class="prow foot">
              <span>记录数:</span><span class="fill"></span>
              <label for="db">搜索数据库:</label>
              <span class="drop db"><select id="db"><option>主</option></select></span>
            </div>
          </div>
        </section>
      </div>

      <section class="cmd">
        <div class="cmd-rail">
          <i class="cmd-grip"></i>
          <button><svg viewBox="0 0 10 10"><path stroke="#c8cbd0" stroke-width="2" d="M1 1l8 8M9 1L1 9"/></svg></button>
          <button><svg class="wrench" viewBox="0 0 16 16"><path fill="none" stroke="#d0d2d6" stroke-width="3" d="M1 15l8-8"/><path class="f" d="M8 5c0-3 2-5 5-5l-2 3 2 2 3-1c0 3-2 5-5 5l-3-1z"/></svg></button>
        </div>
        <div class="cmd-main">
          <div class="history"><p>命令: _circle</p><p>指定圆的圆心或 [三点(3P)/两点(2P)/切点、切点、半径(T)]:</p></div>
          <div class="prompt"><svg viewBox="0 0 16 16"><circle cx="8" cy="8" r="7.500" fill="none" stroke="#dcdcdc"/><path class="b" d="M7 7h2v2H7zM9 3h4v4l-1-1-2 1z"/></svg><i class="caret big"></i><b>CIRCLE</b><span>指定圆的半径或 [<button>直径(<em>D</em>)</button>]:</span><input type="text" aria-label="命令行"></div>
        </div>
      </section>
    </div>
  </main>

  <footer class="status">
    <div class="blank"></div>
    <button class="model">模型</button>
    <div class="sg">
      <button class="on"><svg viewBox="0 0 16 16"><path class="lw" d="M3.500 0v16M8.500 0v16M13.500 0v16M0 3.500h16M0 8.500h16M0 13.500h16"/></svg></button>
      <button><svg viewBox="0 0 16 16"><path class="lw" stroke-width="2" stroke-dasharray="2 3" d="M2 3h13M2 8h13M2 13h13"/></svg></button><i class="caret big"></i>
    </div>
    <div class="sg">
      <button><svg viewBox="0 0 16 16"><path class="l" d="M1.500 0v15.500H16M1.500 11h5v4"/></svg></button>
      <button class="on"><svg viewBox="0 0 16 16"><path class="lw" d="M11 3a6 6 0 1 0 2 7M6 9.500h10M6 9l8-8M12.500 6v7"/></svg></button><i class="caret big"></i>
      <button><svg viewBox="0 0 16 16"><path stroke="#f06a6a" d="M1 1l14 14"/><path stroke="#50d070" stroke-width="1.500" d="M7.500 0v16"/><circle cx="7.500" cy="7.500" r="1.500" fill="#fff"/></svg></button><i class="caret big"></i>
    </div>
    <div class="sg">
      <button class="on"><svg viewBox="0 0 16 16"><path class="lw" stroke-width="1.500" d="M14 1L1 14h15"/><path fill="#fff" d="M5 7h3v3H5z"/></svg></button>
      <button><svg viewBox="0 0 16 16"><path class="l" d="M6 2.500h9.500v13h-13V7"/><path fill="none" stroke="#f5a878" stroke-width="1.500" d="M.7.7h4v4h-4z"/></svg></button><i class="caret big"></i>
    </div>
    <div class="sg">
      <button class="on"><svg viewBox="0 0 16 16"><use href="#i-anno" x="-1"/><circle class="lw" cx="13.500" cy="3.500" r="2"/></svg></button>
      <button><svg viewBox="0 0 16 16"><use href="#i-anno" x="-1"/><path class="f" d="M14 0l-4 4h2l-1 4 5-5h-2z"/></svg></button>
      <button><svg><use href="#i-anno"/></svg></button>
      <button class="scale">1:1</button><i class="caret big"></i>
    </div>
    <div class="sg gear"><button><svg><use href="#i-gear"/></svg></button><i class="caret big"></i></div>
    <div class="sg"><button><svg viewBox="0 0 16 16"><path stroke="#e0e2e5" stroke-width="2" d="M8 0v16M0 8h16"/></svg></button></div>
    <div class="sg"><button><svg viewBox="0 0 16 16"><path class="l" d="M.5 1.500h5v5h-5zM5 15.500h6l-3-5z"/><circle class="l" cx="12.500" cy="6" r="2.800"/></svg></button></div>
    <div class="sg roomy"><button><svg viewBox="0 0 16 16"><path class="f" d="M1 2c0-3 12-3 12 0v11c0 2-12 2-12 0z"/><path stroke="#8a8f98" fill="none" d="M1 5c2 2 10 2 12 0M1 9c2 2 10 2 12 0"/><path stroke="#28a055" stroke-width="2" fill="none" d="M8 12l3 3 5-6"/></svg></button></div>
    <div class="sg"><button><svg viewBox="0 0 16 16"><path class="l" d="M.5 2.500h15v11H.5z"/><path class="f" d="M3 11V8l3 3zM13 5v3l-3-3z"/><path class="l" d="M4 10l2-2M12 6l-2 2"/></svg></button></div>
    <div class="sg"><button><svg viewBox="0 0 16 16"><path stroke="#e0e2e5" stroke-width="2" d="M0 2h16M0 8h16M0 14h16"/></svg></button></div>
  </footer>
</div>
<script src="grid.js"></script>
</body>
</html>
```
FILE: styles.css
```css
:root {
  --dark: #222933;
  --panel: #3b4453;
  --deep: #2d3340;
  --field: #4c586b;
  --line: #262c38;
  --text: #eef0f2;
}
* { box-sizing: border-box; }
body {
  margin: 0;
  background: var(--dark);
  color: var(--text);
  font: 12px/16px "Noto Sans", "Noto Sans CJK SC", sans-serif;
}
button, input, select { font: inherit; color: inherit; background: none; border: 0; padding: 0; margin: 0; outline: 0; border-radius: 0; }
h1, h2, h3, h4, p, ul { margin: 0; padding: 0; font-size: inherit; font-weight: normal; list-style: none; }
a { color: inherit; text-decoration: none; }
svg { width: 16px; height: 16px; flex: none; display: block; overflow: visible; }
.sprite { position: absolute; width: 0; height: 0; }

.f { fill: #d9d9d9; }
.d { fill: #868b93; }
.b { fill: #6cc0fe; }
.y { fill: #fdd47f; }
.r { fill: #ff6464; }
.c { fill: #62d4dc; }
.l { fill: none; stroke: #d9d9d9; }
.lb { fill: none; stroke: #6cc0fe; }
.ly { fill: none; stroke: #fdd47f; }
.lw { fill: none; stroke: #fff; }
.w { stroke-width: 2; }

.caret { flex: none; width: 6px; height: 3px; background: #d3d6da; clip-path: polygon(0 0, 100% 0, 50% 100%); }
.caret.big { width: 8px; height: 4px; }
.caret.dim { background: #6b717a; }
.caret.side { width: 4px; height: 8px; clip-path: polygon(0 0, 100% 50%, 0 100%); }

.window { display: flex; flex-direction: column; height: 100vh; border: 1px solid #0696d7; }

/* title bar */
.titlebar { display: flex; align-items: center; height: 35px; padding: 0 1px 5px 14px; }
.logo { position: relative; height: 18px; }
.logo svg { width: 40px; height: 18px; }
.logo-a, .logo-elc { position: absolute; top: 0; left: 8px; font: bold 12px/16px "Open Sans", sans-serif; color: #fff; }
.logo-elc { left: 23px; font-size: 7px; }
.logo-caret { margin: 0 7px 0 3px; }
.qat { display: flex; align-items: center; }
.qat button { display: flex; justify-content: center; width: 24px; }
.qat .slim { width: 12px; }
.qat .more { flex-direction: column; align-items: center; gap: 2px; width: 16px; }
.dash { width: 8px; height: 1px; background: #d3d6da; }
.qat .share { width: auto; gap: 4px; margin-left: 5px; color: #8fd0fb; }
.caption { flex: 1; display: flex; justify-content: center; gap: 16px; }
.infocenter { display: flex; align-items: center; }
.infocenter input { width: 178px; height: 20px; margin: 0 1px 0 5px; padding: 0 3px 2px; background: #474e60; font-style: italic; }
.infocenter input::placeholder { color: #b4b8c0; }
.infocenter button { display: flex; justify-content: center; gap: 5px; width: 24px; }
.infocenter .login { width: auto; margin: 0 59px 0 5px; }
.infocenter .caret + button { margin-left: 7px; }
.vline { width: 1px; height: 18px; margin: 0 6px 0 10px; background: #4a525f; }
.winctl { display: flex; margin-left: 66px; }
.winctl button { display: flex; justify-content: center; width: 46px; }
.winctl svg { width: 12px; height: 12px; }

/* ribbon tabs */
.tabs { display: flex; align-items: center; height: 20px; padding-left: 6px; color: #b7babf; }
.tabs a { height: 20px; padding: 2px 10px 0; line-height: 18px; }
.tabs .on { background: var(--panel); color: #fff; }
.collapse { display: flex; justify-content: center; align-items: center; width: 15px; height: 8px; margin: 0 3px 0 21px; background: #f2f2f2; }
.collapse i { width: 5px; height: 3px; background: #444; clip-path: polygon(50% 0, 100% 100%, 0 100%); }

/* ribbon */
.ribbon { display: flex; height: 99px; margin: 0 4px; background: var(--panel); }
.panel { display: flex; flex-direction: column; flex: none; padding-top: 5px; border-right: 1px solid var(--dark); }
.panel h2 { display: flex; justify-content: center; align-items: center; gap: 7px; height: 22px; padding-top: 4px; position: relative; }
.tools { display: flex; height: 72px; }
.lg { display: flex; flex-direction: column; align-items: center; width: 40px; padding-top: 3px; line-height: 17px; white-space: nowrap; }
.lg svg { width: 32px; height: 32px; margin-bottom: 3px; }
.lg .caret { margin-top: 3px; }
.grid { display: grid; grid-auto-rows: 24px; }
.sm { display: flex; align-items: center; gap: 5px; white-space: nowrap; line-height: 18px; }
.sm .caret { margin-left: 6px; }
.sm .caret.tight { margin-left: 0; }
.g4 { grid-template-columns: 60px 59px 75px 20px; padding-left: 6px; }
.g6 { grid-template-columns: 24px 24px 24px 24px 90px; padding-left: 4px; }
.p-draw { width: 211px; }
.p-draw .tools { padding-left: 2px; }
.p-draw .lg:nth-child(4) { width: 44px; }
.p-draw .grid { margin-left: 6px; }
.p-draw .sm .caret { margin-left: 2px; }
.p-modify { width: 227px; }
.p-note { width: 156px; }
.p-note .tools { padding-left: 4px; }
.p-note .lg { width: 42px; }
.p-note .grid { margin-left: 4px; }
.p-note .sm .caret { margin-left: 2px; }
.p-layer { width: 252px; }
.p-layer .lg { margin-left: 1px; }
.layers .combo { width: 208px; margin: 1px 0; padding-left: 4px; gap: 2px; }
.layers .combo select { padding-left: 4px; }
.layers .sm { height: 24px; }
.p-block { width: 134px; }
.p-block .lg { margin-left: 1px; margin-right: 4px; }
.p-block .sm .tight { margin-left: 2px; }
.p-prop { width: 244px; }
.p-prop .lg { margin-left: 1px; }
.props { flex: 1; display: grid; grid-template-columns: 16px 1fr; grid-auto-rows: 24px; column-gap: 3px; padding: 0 2px; align-items: center; }
.launcher { position: absolute; right: 3px; top: 10px; width: 8px; height: 8px; }
.p-group { width: 68px; }
.p-group .lg { width: 41px; }
.p-group .sm { justify-content: center; width: 24px; }
.pressed { background: #40597a; border: 1px solid #6cc0fe; }
.p-util { width: 76px; }
.p-util .lg { width: 50px; margin-right: 3px; }
.p-clip { width: 87px; border-right: 0; }
.p-clip .lg { width: 50px; margin-right: 4px; }

.combo { display: flex; align-items: center; height: 22px; background: var(--field); border: 1px solid var(--line); position: relative; }
.combo::after { content: ""; position: absolute; right: 1px; top: 8px; width: 8px; height: 4px; background: #d3d6da; clip-path: polygon(0 0, 100% 0, 50% 100%); pointer-events: none; }
.combo select { flex: 1; min-width: 0; height: 20px; appearance: none; }
.swatch { width: 14px; height: 14px; background: #fff; border: 1px solid #ddd; }
.rule { width: 64px; height: 1px; margin-left: 6px; background: #fff; }
.props .combo select { padding-left: 2px; }
.props .swatch { margin-left: 6px; margin-right: 2px; width: 16px; height: 16px; }

/* file tabs */
.filetabs { display: flex; align-items: center; height: 27px; padding: 3px 0 0 19px; }
.filetabs .menu { display: flex; flex-direction: column; gap: 3px; width: 16px; }
.menu i { height: 2px; background: #e0e2e5; }
.slash { width: 10px; margin: 0 7px 0 9px; }
.filetab { display: flex; align-items: center; gap: 9px; height: 24px; margin-left: 7px; padding: 0 12px 0 17px; background: var(--panel); clip-path: polygon(10px 0, 100% 0, calc(100% - 10px) 100%, 0 100%); font-weight: bold; }
.filetab svg { width: 8px; height: 8px; margin-right: 1px; }
.plus { margin-left: 8px; }
.plus svg { width: 14px; height: 14px; }

/* work area */
.work { flex: 1; min-height: 0; display: flex; margin: 0 3px; padding-top: 5px; background: var(--panel); }
.dock { display: flex; width: 255px; padding-top: 2px; }
.pm { display: flex; flex-direction: column; width: 227px; }
.pm-title { display: flex; align-items: center; gap: 5px; height: 22px; padding: 0 5px 2px; background: var(--deep); border-radius: 3px 3px 0 0; }
.grip { width: 5px; height: 10px; margin-top: 2px; background: repeating-linear-gradient(90deg, transparent 0 1px, var(--deep) 1px 2px), repeating-linear-gradient(#b9bec6 0 1px, transparent 1px 3px); }
.pm-body { flex: 1; display: flex; flex-direction: column; min-height: 0; padding: 9px 8px 20px; }
.pm-bar { display: flex; align-items: center; height: 24px; margin: 0 -8px 4px 4px; gap: 8px; overflow: hidden; }
.pm-bar .caret { margin: 0 -2px 0 0; }
.pm-sel { height: 20px; margin: 0 1px 2px; }
.pm-sel::after { right: 4px; top: 7px; }
.pm-sel select { height: 18px; padding-left: 3px; }
.bar { display: flex; align-items: center; height: 23px; padding: 0 6px 1px 9px; background: var(--deep); border: 1px solid var(--line); font-weight: bold; }
.bar .caret { margin-left: auto; }
.bar-icons { display: flex; gap: 6px; margin-left: auto; }
.bar-icons svg { width: 10px; height: 10px; }
.bar-icons .pic { width: 12px; }
.bar-icons + .caret { margin-left: 11px; }
.tree { height: 261px; border: 1px solid var(--line); border-top: 0; padding-left: 7px; }
.tree li { position: relative; display: flex; align-items: center; height: 22px; gap: 5px; }
.tree li svg { position: relative; }
.tree button { width: 9px; height: 9px; margin: 2px 0 0; background: #f2f2f2; border: 1px solid #8a9099; color: #24449a; font: bold 9px/7px "DejaVu Sans", sans-serif; z-index: 1; }
.tree li::before { content: ""; position: absolute; left: 4px; top: -8px; height: 22px; border-left: 1px dotted #aab0ba; }
.tree li:first-child::before { display: none; }
.tree li::after { content: ""; position: absolute; left: 9px; top: 12px; width: 5px; border-top: 1px dotted #aab0ba; }
.cur { font-weight: bold; }
.splitter { display: flex; justify-content: center; align-items: center; gap: 2px; height: 8px; background: var(--deep); border: 1px solid var(--line); }
.splitter i { width: 2px; height: 2px; background: #e6e8ea; }
.details { flex: 1; border: 1px solid var(--line); border-top: 0; }
.sidetabs { width: 22px; padding-top: 24px; }
.sidetabs button { display: flex; align-items: center; justify-content: center; width: 22px; height: 133px; background: var(--deep); border: 1px solid var(--line); border-radius: 0 4px 4px 0; color: #a3a8b0; }
.sidetabs .on { height: 132px; background: var(--panel); border-left-color: var(--panel); color: var(--text); }
.sidetabs span, .rail-title { writing-mode: vertical-rl; text-orientation: sideways; transform: rotate(180deg); }

.right { flex: 1; min-width: 0; display: flex; flex-direction: column; }
.canvas { flex: 1; min-height: 0; position: relative; margin-right: 4px; background: #212830; overflow: hidden; }
.drawing { position: absolute; inset: 0; width: 100%; height: 100%; shape-rendering: crispEdges; }
.minor { stroke: #272e3b; }
.major { stroke: #323949; }
.ent, .cross { fill: none; stroke: #fff; }
.dots { fill: none; stroke: #9a9da2; stroke-dasharray: 1 3; }
.rubber { stroke: #f5b21a; stroke-dasharray: 16 9; }
.vplabel { position: absolute; left: 3px; top: 5px; display: flex; }
.vpctl { position: absolute; right: 12px; top: 10px; display: flex; gap: 9px; }
.vpctl svg, .rail button svg { width: 10px; height: 10px; }
.cube { position: absolute; right: 15px; top: 36px; width: 136px; height: 140px; }
.cube-t text { font: 18px "Noto Sans CJK SC", sans-serif; fill: #aeb0b2; text-anchor: middle; }
.cube-t .top { font-size: 30px; fill: #5f666f; }
.wcs { position: absolute; right: 60px; top: 193px; display: flex; align-items: center; gap: 5px; width: 47px; height: 17px; padding: 0 4px; background: #9c9dab; border: 1px solid #7e808e; border-radius: 4px; color: #50525f; font-size: 10px; line-height: 14px; }
.wcs svg { width: 9px; height: 5px; }
.ucs { position: absolute; left: 14px; bottom: 13px; width: 80px; height: 76px; shape-rendering: crispEdges; }
.dyn { position: absolute; left: 1009px; top: 264px; width: 67px; height: 22px; padding: 0 3px 1px; border: 1px solid #000; color: #fff; background: linear-gradient(#0078d7, #0078d7) 3px 1px / 54px 17px no-repeat #fff; }
.tip { position: absolute; left: 1190px; top: 333px; display: flex; align-items: flex-end; gap: 21px; width: 124px; height: 25px; padding: 0 3px 3px; background: #999; border: 1px solid #000; color: #000; white-space: nowrap; line-height: 19px; }
.tip svg { width: 11px; height: 11px; }

.monitor { position: absolute; right: 6px; top: 665px; display: flex; align-items: center; width: 120px; height: 60px; }
.rates { position: absolute; left: 40px; right: 0; top: 9px; height: 42px; padding: 0 9px 0 20px; background: #20252f; border: 1px solid #191d25; border-radius: 0 21px 21px 0; color: #7d828b; font-size: 10px; }
.rates p { display: flex; justify-content: flex-end; align-items: center; gap: 1px; height: 20px; }
.rates b { color: #e8eaec; font-size: 11px; font-weight: 600; }
.rates i { margin-right: auto; font-style: normal; font-weight: bold; font-size: 11px; }
.up { color: #3fa9f0; }
.dn { color: #22a83a; }
.gauge { position: relative; display: flex; align-items: center; justify-content: center; width: 60px; height: 60px; border-radius: 50%; border: 1px solid #1c2029; background: linear-gradient(#353b49, #262c38); font: 24px/28px "Open Sans", sans-serif; font-weight: 300; color: #dfe1e4; }
.gauge svg { position: absolute; inset: 0; width: 58px; height: 58px; }
.gauge small { font-size: 10px; font-weight: 400; }

/* floating catalog browser */
.palette { position: absolute; left: 22px; top: 32px; display: flex; width: 700px; height: 303px; padding: 2px 1px 1px 0; background: var(--deep); border-radius: 3px; }
.rail { display: flex; flex-direction: column; align-items: center; gap: 9px; width: 24px; padding: 3px 0 0; color: #b4b8be; }
.rail button { display: flex; height: 10px; }
.rail-title { margin-top: auto; }
.pbody { flex: 1; display: flex; flex-direction: column; padding: 20px 8px 12px 7px; background: var(--panel); border: 1px solid var(--line); border-radius: 3px; }
.prow { display: flex; align-items: center; height: 22px; gap: 3px; white-space: nowrap; }
.fill { flex: 1; }
.prow .ico + .ico { margin-left: 8px; }
.prow:first-child { padding-right: 5px; }
.drop { position: relative; height: 22px; background: linear-gradient(#5a6780, #3f4858); border: 1px solid var(--line); }
.drop::after { content: ""; position: absolute; right: 6px; top: 8px; width: 7px; height: 4px; background: #fff; clip-path: polygon(0 0, 100% 0, 50% 100%); pointer-events: none; }
.drop select { width: 100%; height: 20px; padding: 0 4px; appearance: none; }
.cat { width: 96px; }
.db { width: 66px; margin-right: 3px; }
.search { height: 26px; margin-top: 11px; }
.sfield { display: flex; align-items: center; width: 524px; height: 26px; padding: 0 4px 0 2px; border: 1px solid var(--line); }
.sfield input { flex: 1; height: 22px; }
.sfield input::placeholder { color: #7f858f; }
.search .ico { margin-left: 2px; }
.btn { display: flex; justify-content: center; align-items: center; height: 26px; padding: 0 4px; background: linear-gradient(#5a6780, #3f4858); border: 1px solid var(--line); }
.reshead { display: flex; align-items: center; height: 24px; margin-top: 5px; padding: 0 3px 0 2px; background: var(--deep); gap: 3px; }
.reshead b { flex: 1; }
.sq { width: 24px; height: 24px; }
.results { flex: 1; background: #efefef; border: 1px solid #5e87b0; }
.cols { height: 8px; background: linear-gradient(#fff 40%, #f0f2f4); border-bottom: 1px solid #cfcfcf; }
.foot { margin-top: 7px; }

/* command line */
.cmd { display: flex; height: 60px; margin: 4px 1px 4px 0; background: var(--deep); border: 1px solid var(--dark); border-left: 0; }
.cmd-rail { display: flex; flex-direction: column; align-items: center; width: 24px; padding-top: 4px; gap: 8px; }
.cmd-grip { width: 17px; height: 5px; background: repeating-linear-gradient(90deg, transparent 0 2px, var(--deep) 2px 3px), linear-gradient(#e0e2e5 2px, transparent 2px 3px, #e0e2e5 3px); }
.cmd-rail button { display: flex; }
.cmd-rail svg { width: 10px; height: 10px; }
.cmd-rail .wrench { width: 16px; height: 16px; }
.cmd-main { flex: 1; display: flex; flex-direction: column; color: #000; font: 12px/14px "DejaVu Sans Mono", "Noto Sans CJK SC", monospace; }
.history { flex: 1; padding: 6px 2px 0; background: #c6c6c6; }
.history p { height: 15px; line-height: 15px; white-space: nowrap; }
.prompt { display: flex; align-items: center; height: 22px; padding-left: 4px; background: #fff; border-top: 1px solid var(--dark); white-space: nowrap; }
.prompt .caret { margin: 0 6px 0 2px; background: #6b6b6b; }
.prompt span { margin-left: 6px; }
.prompt button { background: #d2d2d2; border-radius: 3px; }
.prompt em { font-style: normal; color: #00f; }
.prompt input { flex: 1; }

/* status bar */
.status { display: flex; height: 32px; padding: 2px 4px 6px 3px; gap: 3px; }
.blank { flex: 1; background: var(--panel); margin-right: 5px; }
.sg, .model { display: flex; align-items: center; background: var(--panel); }
.model { width: 27px; justify-content: center; }
.sg button { display: flex; justify-content: center; align-items: center; width: 24px; height: 24px; }
.sg .on { background: #5f8dc0; width: 23px; }
.sg .caret { margin: 0 4px; }
.sg.gear { margin-right: -2px; }
.sg .scale { width: 20px; padding-left: 5px; }
.roomy button { width: 30px; }
```
FILE: grid.js
```js
// Draws the model-space grid: a major line every fifth minor line.
(function () {
  var canvas = document.getElementById('canvas');
  var step = 14.76;
  var first = 63.3 - 5 * step;

  function draw() {
    var w = canvas.clientWidth, h = canvas.clientHeight;
    var minor = '', major = '';
    for (var i = 0; first + i * step < Math.max(w, h); i++) {
      var p = Math.floor(first + i * step) + 0.5;
      var d = 'M' + p + ' 0V' + h + 'M0 ' + p + 'H' + w;
      if (i % 5 === 0) major += d; else minor += d;
    }
    document.getElementById('minor').setAttribute('d', minor);
    document.getElementById('major').setAttribute('d', major);
  }

  draw();
  window.addEventListener('resize', draw);
})();
```
